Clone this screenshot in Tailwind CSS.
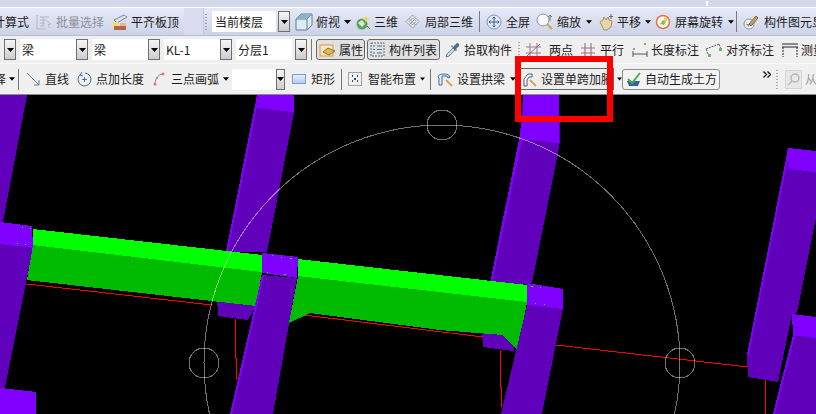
<!DOCTYPE html>
<html lang="zh-CN">
<head>
<meta charset="UTF-8">
<title>钢筋算量</title>
<script src="https://cdn.jsdelivr.net/npm/@tailwindcss/browser@4"></script>
</head>
<body class="bg-black">
<div class="relative flex flex-col w-[816px] h-[414px] overflow-hidden text-[12px] leading-none whitespace-nowrap text-[#1a1a1a] font-['Noto_Sans_CJK_SC','Noto_Sans',sans-serif]">

  <!-- top strip -->
  <div class="flex shrink-0 h-[7px] bg-[#d3d8eb]">
    <div class="ml-[706px] mt-[1px] w-[2px] h-[5px] bg-white"></div>
  </div>
  <div class="shrink-0 h-[1px] bg-white"></div>

  <!-- row 1 -->
  <div class="flex items-center shrink-0 *:shrink-0 h-[28px] border-b border-[#b9bccb] bg-linear-to-b from-[#e6e9f6] to-[#cdd3e8]">
    <span class="ml-[-7px] w-[36px]">计算式</span>
    <svg class="ml-[7px] w-[16px] h-[16px]" viewBox="0 0 16 16" fill="none" stroke="#b4b8c4"><path d="M1 1v14h9M4 3h9M4 6h7M4 9h5M4 12h4M7 3v9M11 7l4 3-3 1 2 3"/></svg>
    <span class="ml-[4px] w-[48px] text-[#8d8f98]">批量选择</span>
    <svg class="ml-[8px] w-[16px] h-[16px]" viewBox="0 0 16 16"><path d="M2 6 12 1l3 2L5 9z" fill="#dfe3ea" stroke="#7d8796"/><rect x="1" y="8" width="5" height="4" fill="#f2e25a"/><rect x="2" y="12" width="12" height="4" fill="#b5654b"/><path d="M8 9h6v3H8z" fill="#e8b98f"/></svg>
    <span class="ml-[3px] w-[48px]">平齐板顶</span>
    <div class="ml-[5px] w-[20px] h-[27px] bg-[#d8dcee] border-r border-[#c3c7da]"></div>
    <div class="flex flex-col gap-[2px] ml-[1px] w-[2px]">
      <i class="block w-[2px] h-[1px] bg-[#9aa0b6]"></i><i class="block w-[2px] h-[1px] bg-[#9aa0b6]"></i><i class="block w-[2px] h-[1px] bg-[#9aa0b6]"></i><i class="block w-[2px] h-[1px] bg-[#9aa0b6]"></i><i class="block w-[2px] h-[1px] bg-[#9aa0b6]"></i><i class="block w-[2px] h-[1px] bg-[#9aa0b6]"></i>
    </div>
    <div class="flex items-center ml-[5px] pl-[3px] w-[64px] h-[21px] bg-white">当前楼层</div>
    <div class="flex items-center justify-center ml-[2px] w-[12px] h-[21px] border border-[#6f6f6f] bg-linear-to-b from-[#f6f6f6] to-[#cdcdcd]"><svg class="w-[7px] h-[4px]" viewBox="0 0 7 4"><path d="M0 0h7L3.500 4z"/></svg></div>
    <svg class="ml-[5px] w-[18px] h-[18px]" viewBox="0 0 18 18"><path d="M1 6 6 1h11v11l-5 5H1z" fill="#dcebf5" stroke="#5d7f96"/><path d="M1 6h11v11M12 6l5-5" fill="none" stroke="#5d7f96"/><path d="M1 6 6 1h11l-5 5z" fill="#8fb1c7"/></svg>
    <span class="ml-[3px] w-[24px]">俯视</span>
    <svg class="ml-[4px] w-[7px] h-[4px]" viewBox="0 0 7 4"><path d="M0 0h7L3.500 4z"/></svg>
    <svg class="ml-[4px] w-[16px] h-[16px]" viewBox="0 0 16 16"><circle cx="7" cy="10" r="5.500" fill="#5aa25a"/><path d="M3 9l4-3 3 4-3 3z" fill="#d9e9d9"/><path d="M11 1l1 3 3 1-3 1-1 3-1-3-3-1 3-1z" fill="#e9d94f"/><path d="M12 12l3 3" stroke="#666"/></svg>
    <span class="ml-[3px] w-[24px]">三维</span>
    <svg class="ml-[7px] w-[15px] h-[15px]" viewBox="0 0 15 15" fill="#e5ecf4" stroke="#8a9db3"><path d="M7.500 1 14 7.500 7.500 14 1 7.500z"/><path d="M4 4.500 10.500 11M11 4 4.500 10.500M7.500 4 11 7.500 7.500 11 4 7.500z" fill="#fbf3c9"/></svg>
    <span class="ml-[5px] w-[48px]">局部三维</span>
    <div class="ml-[6px] w-[1px] h-[21px] bg-[#777b88]"></div>
    <svg class="ml-[6px] w-[16px] h-[16px]" viewBox="0 0 16 16"><circle cx="8" cy="8" r="7" fill="#dfe8f5" stroke="#7f94b3"/><path d="M8 3v10M3 8h10M6.500 4.500 8 3l1.500 1.500M6.500 11.500 8 13l1.500-1.500M4.500 6.500 3 8l1.500 1.500M11.500 6.500 13 8l-1.500 1.500" fill="none" stroke="#3c5a8c"/></svg>
    <span class="ml-[4px] w-[24px]">全屏</span>
    <svg class="ml-[6px] w-[19px] h-[17px]" viewBox="0 0 19 17"><circle cx="7" cy="7" r="6" fill="#f6f8fb" stroke="#8d97a6"/><path d="M11 11l5 5" stroke="#c8a648" stroke-width="2"/><path d="M14 2v6M12 4l2-2 2 2" fill="none" stroke="#777"/></svg>
    <span class="ml-[2px] w-[24px]">缩放</span>
    <svg class="ml-[5px] w-[6px] h-[4px]" viewBox="0 0 7 4"><path d="M0 0h7L3.500 4z"/></svg>
    <svg class="ml-[6px] w-[17px] h-[18px]" viewBox="0 0 17 18"><path d="M2 9l3-2 1-3 2 3 2-3 1 3 3 1-1 6-4 3H6z" fill="#e8d6a8" stroke="#a38f5f"/><path d="M13 1v5M11 3.500h4" stroke="#6d6d6d"/></svg>
    <span class="ml-[2px] w-[24px]">平移</span>
    <svg class="ml-[4px] w-[6px] h-[4px]" viewBox="0 0 7 4"><path d="M0 0h7L3.500 4z"/></svg>
    <svg class="ml-[4px] w-[16px] h-[16px]" viewBox="0 0 16 16"><circle cx="8" cy="8" r="6.500" fill="#f5f9ea" stroke="#e4734e" stroke-width="1.500"/><path d="M5 10l3-4 3 2-2 3z" fill="#7fc25a"/><rect x="9" y="4" width="3" height="3" fill="#f0d23c"/></svg>
    <span class="ml-[4px] w-[48px]">屏幕旋转</span>
    <svg class="ml-[5px] w-[6px] h-[4px]" viewBox="0 0 7 4"><path d="M0 0h7L3.500 4z"/></svg>
    <div class="ml-[2px] w-[1px] h-[21px] bg-[#777b88]"></div>
    <svg class="ml-[6px] w-[16px] h-[16px]" viewBox="0 0 16 16"><circle cx="6" cy="10" r="5" fill="#eef1f6" stroke="#8d97a6"/><path d="M6 10 13 2l2 2-7 8z" fill="#d2a35a" stroke="#75613b"/><path d="M3 10h3v3z" fill="#6f87b0"/></svg>
    <span class="ml-[5px]">构件图元显示</span>
  </div>

  <!-- row 2 -->
  <div class="flex items-center shrink-0 *:shrink-0 h-[28px] border-b border-[#fafafa] bg-[#efefef]">
    <div class="flex items-center justify-center ml-[4px] w-[12px] h-[21px] border border-[#6f6f6f] bg-linear-to-b from-[#f6f6f6] to-[#cdcdcd]"><svg class="w-[7px] h-[4px]" viewBox="0 0 7 4"><path d="M0 0h7L3.500 4z"/></svg></div>
    <div class="flex items-center ml-[4px] pl-[2px] w-[56px] h-[21px] bg-white">梁</div>
    <div class="flex items-center justify-center w-[12px] h-[21px] border border-[#6f6f6f] bg-linear-to-b from-[#f6f6f6] to-[#cdcdcd]"><svg class="w-[7px] h-[4px]" viewBox="0 0 7 4"><path d="M0 0h7L3.500 4z"/></svg></div>
    <div class="flex items-center ml-[4px] pl-[2px] w-[56px] h-[21px] bg-white">梁</div>
    <div class="flex items-center justify-center w-[12px] h-[21px] border border-[#6f6f6f] bg-linear-to-b from-[#f6f6f6] to-[#cdcdcd]"><svg class="w-[7px] h-[4px]" viewBox="0 0 7 4"><path d="M0 0h7L3.500 4z"/></svg></div>
    <div class="flex items-center ml-[4px] pl-[2px] w-[56px] h-[21px] bg-white">KL-1</div>
    <div class="flex items-center justify-center w-[12px] h-[21px] border border-[#6f6f6f] bg-linear-to-b from-[#f6f6f6] to-[#cdcdcd]"><svg class="w-[7px] h-[4px]" viewBox="0 0 7 4"><path d="M0 0h7L3.500 4z"/></svg></div>
    <div class="flex items-center ml-[4px] pl-[2px] w-[56px] h-[21px] bg-white">分层1</div>
    <div class="flex items-center justify-center ml-[3px] w-[12px] h-[21px] border border-[#6f6f6f] bg-linear-to-b from-[#f6f6f6] to-[#cdcdcd]"><svg class="w-[7px] h-[4px]" viewBox="0 0 7 4"><path d="M0 0h7L3.500 4z"/></svg></div>
    <div class="ml-[4px] w-[1px] h-[21px] bg-[#777]"></div>
    <div class="flex items-center ml-[4px] pl-[2px] w-[49px] h-[21px] rounded-[3px] border border-[#666] bg-[#e1e1e1]">
      <svg class="shrink-0 w-[17px] h-[14px]" viewBox="0 0 17 14"><rect x="1" y="2" width="13" height="11" fill="#fbe6c8" stroke="#e8924a"/><path d="M4 9l5-4 7 3-6 4z" fill="#e3bb54" stroke="#8a6f2d"/></svg>
      <span class="ml-[3px]">属性</span>
    </div>
    <div class="flex items-center ml-[2px] pl-[2px] w-[73px] h-[21px] rounded-[3px] border border-[#666] bg-[#e1e1e1]">
      <svg class="shrink-0 w-[15px] h-[15px]" viewBox="0 0 15 15" fill="none" stroke="#4d6d96"><rect x="1" y="1" width="13" height="13" stroke-dasharray="2 1"/><path d="M3 4h2M3 7.500h2M3 11h2M7 4h5M7 7.500h5M7 11h5"/></svg>
      <span class="ml-[4px]">构件列表</span>
    </div>
    <svg class="ml-[5px] w-[15px] h-[16px]" viewBox="0 0 15 16"><path d="M1 15l1-3 6-6 2 2-6 6z" fill="#cfe0ee" stroke="#5b7da0"/><path d="M8 5l3-3a1.500 1.500 0 0 1 3 2l-3 3 1 1-1 1-5-5 1-1z" fill="#4c6d91"/></svg>
    <span class="ml-[4px] w-[48px]">拾取构件</span>
    <div class="flex flex-col gap-[2px] ml-[6px] w-[2px]">
      <i class="block w-[2px] h-[1px] bg-[#a9a9a9]"></i><i class="block w-[2px] h-[1px] bg-[#a9a9a9]"></i><i class="block w-[2px] h-[1px] bg-[#a9a9a9]"></i><i class="block w-[2px] h-[1px] bg-[#a9a9a9]"></i><i class="block w-[2px] h-[1px] bg-[#a9a9a9]"></i><i class="block w-[2px] h-[1px] bg-[#a9a9a9]"></i>
    </div>
    <svg class="ml-[5px] w-[17px] h-[16px]" viewBox="0 0 17 16" fill="none"><path d="M5 1v14M12 1v14M1 5h15M1 11h15" stroke="#8d7f95"/><path d="M2 14 15 2" stroke="#d9534f"/></svg>
    <span class="ml-[7px] w-[24px]">两点</span>
    <svg class="ml-[8px] w-[14px] h-[14px]" viewBox="0 0 14 14" fill="none"><path d="M4 0v14M10 0v14" stroke="#5a6fa8"/><path d="M0 5h14M0 10h14" stroke="#c9605c"/></svg>
    <span class="ml-[5px] w-[24px]">平行</span>
    <svg class="ml-[8px] w-[16px] h-[16px]" viewBox="0 0 16 16" fill="none" stroke="#555"><path d="M1 9v6M15 9v6M1 12h14"/><rect x="1" y="6" width="2" height="2" fill="#66bb6a" stroke="none"/><rect x="12" y="1" width="2" height="2" fill="#66bb6a" stroke="none"/></svg>
    <span class="ml-[3px] w-[48px]">长度标注</span>
    <svg class="ml-[6px] w-[17px] h-[16px]" viewBox="0 0 17 16" fill="none" stroke="#555"><path d="M1 7 14 2M3 12 1 7M16 7l-2-5" stroke-dasharray="2 1"/><rect x="3" y="12" width="3" height="3" fill="#66bb6a" stroke="none"/><rect x="14" y="6" width="3" height="3" fill="#66bb6a" stroke="none"/></svg>
    <span class="ml-[4px] w-[48px]">对齐标注</span>
    <svg class="ml-[8px] w-[16px] h-[16px]" viewBox="0 0 16 16" fill="none" stroke="#222"><path d="M0 2h16M0 5h16" /><path d="M1 5v10M15 5v10" stroke-dasharray="2 1"/></svg>
    <span class="ml-[3px]">测量</span>
  </div>

  <!-- row 3 -->
  <div class="flex items-center shrink-0 *:shrink-0 h-[31px] border-b border-[#8c8c8c] bg-[#f0f0f0]">
    <span class="ml-[-6px] w-[12px]">择</span>
    <svg class="ml-[3px] w-[6px] h-[4px]" viewBox="0 0 7 4"><path d="M0 0h7L3.500 4z"/></svg>
    <div class="ml-[3px] w-[1px] h-[21px] bg-[#777]"></div>
    <svg class="ml-[8px] w-[13px] h-[13px]" viewBox="0 0 13 13" fill="none" stroke="#5e7ea3"><path d="M0 0 12 12M7 12h5V7"/></svg>
    <span class="ml-[5px] w-[24px]">直线</span>
    <svg class="ml-[8px] w-[15px] h-[15px]" viewBox="0 0 15 15" fill="none" stroke="#4d6d96"><path d="M4 2a6.500 6.500 0 1 0 4-1"/><path d="M5 0 3 3l3 1M7.500 5v5M5 7.500h5"/></svg>
    <span class="ml-[4px] w-[48px]">点加长度</span>
    <svg class="ml-[9px] w-[12px] h-[14px]" viewBox="0 0 12 14" fill="none"><path d="M2 12C2 6 6 2 10 2" stroke="#6d8fb5"/><circle cx="2" cy="12" r="1.500" fill="#e2766d"/><circle cx="10" cy="2" r="1.500" fill="#e2766d"/><circle cx="4" cy="6" r="1" fill="#e2766d"/></svg>
    <span class="ml-[6px] w-[48px]">三点画弧</span>
    <svg class="ml-[4px] w-[6px] h-[4px]" viewBox="0 0 7 4"><path d="M0 0h7L3.500 4z"/></svg>
    <div class="ml-[3px] w-[44px] h-[21px] bg-white"></div>
    <div class="flex items-center justify-center w-[9px] h-[21px] border border-[#6f6f6f] bg-linear-to-b from-[#f6f6f6] to-[#cdcdcd]"><svg class="w-[7px] h-[4px]" viewBox="0 0 7 4"><path d="M0 0h7L3.500 4z"/></svg></div>
    <div class="ml-[7px] w-[14px] h-[10px] border border-[#7a9bd0] bg-linear-to-b from-[#e6effb] to-[#b5cdee]"></div>
    <span class="ml-[5px] w-[24px]">矩形</span>
    <div class="ml-[6px] w-[1px] h-[21px] bg-[#777]"></div>
    <svg class="ml-[6px] w-[14px] h-[14px]" viewBox="0 0 14 14" fill="none" stroke="#555"><rect x="0.500" y="0.500" width="13" height="13" stroke-dasharray="1 1"/><path d="M4 4h1M9 4h1M4 9h1M9 9h1M7 6v2" stroke="#2d4f7a" stroke-width="2"/></svg>
    <span class="ml-[6px] w-[48px]">智能布置</span>
    <svg class="ml-[4px] w-[5px] h-[4px]" viewBox="0 0 7 4"><path d="M0 0h7L3.500 4z"/></svg>
    <div class="ml-[5px] w-[1px] h-[21px] bg-[#777]"></div>
    <svg class="ml-[6px] w-[16px] h-[16px]" viewBox="0 0 16 16" fill="none"><path d="M1 6C1 2 13 2 13 6l-2 1-1-2H5v9H2V7z" fill="#e8f2fb" stroke="#3f6d9b"/><path d="M9 9l6 6" stroke="#d9a05a" stroke-width="2"/></svg>
    <span class="ml-[4px] w-[48px]">设置拱梁</span>
    <svg class="ml-[5px] w-[6px] h-[4px]" viewBox="0 0 7 4"><path d="M0 0h7L3.500 4z"/></svg>
    <div class="flex items-center ml-[4px] pl-[2px] w-[94px] h-[22px] overflow-hidden border border-[#666] bg-[#eeeeee]">
      <svg class="shrink-0 w-[15px] h-[15px]" viewBox="0 0 15 15" fill="none"><path d="M1 14V7l4-5h4v3H6L4 8v6z" fill="#fff" stroke="#3f5d82"/><path d="M7 8l6 6" stroke="#d9a05a" stroke-width="2"/></svg>
      <span class="ml-[3px]">设置单跨加腋</span>
    </div>
    <svg class="ml-[3px] w-[5px] h-[4px]" viewBox="0 0 7 4"><path d="M0 0h7L3.500 4z"/></svg>
    <div class="flex items-center pl-[3px] w-[98px] h-[21px] rounded-[3px] border border-[#8c8c8c] bg-[#f3f3f3]">
      <svg class="shrink-0 w-[15px] h-[15px]" viewBox="0 0 15 15" fill="none"><path d="M1 9h13l-2 5H3z" fill="#3d5f9e"/><path d="M2 7l4 4 8-10" stroke="#3fb04a" stroke-width="2"/></svg>
      <span class="ml-[4px]">自动生成土方</span>
    </div>
    <svg class="ml-[43px] mb-[10px] w-[8px] h-[7px]" viewBox="0 0 8 7" fill="none" stroke="#111" stroke-width="1.300"><path d="M0.500 0.500l3 3-3 3M4.500 0.500l3 3-3 3"/></svg>
    <div class="flex flex-col gap-[2px] ml-[5px] w-[2px]">
      <i class="block w-[2px] h-[1px] bg-[#a9a9a9]"></i><i class="block w-[2px] h-[1px] bg-[#a9a9a9]"></i><i class="block w-[2px] h-[1px] bg-[#a9a9a9]"></i><i class="block w-[2px] h-[1px] bg-[#a9a9a9]"></i><i class="block w-[2px] h-[1px] bg-[#a9a9a9]"></i><i class="block w-[2px] h-[1px] bg-[#a9a9a9]"></i><i class="block w-[2px] h-[1px] bg-[#a9a9a9]"></i>
    </div>
    <div class="flex items-center justify-center ml-[7px] w-[17px] h-[19px] border border-[#d5d5d5] bg-[#e8e8e8]">
      <svg class="w-[13px] h-[13px]" viewBox="0 0 13 13" fill="none" stroke="#b5b5b5" stroke-width="1.500"><circle cx="8" cy="5" r="4"/><path d="M5 8l-4 4"/></svg>
    </div>
    <span class="ml-[3px] text-[#9a9a9a]">从</span>
  </div>

  <!-- 3d canvas -->
  <svg class="block shrink-0 w-[816px] h-[319px] bg-black" viewBox="0 95 816 319" shape-rendering="crispEdges">
    <!-- column 1 -->
    <polygon points="0,95 27,95 3,222 0,222" fill="#6000bb"/>
    <polygon points="0,244 33,248 5,388 0,388" fill="#6000bb"/>
    <polygon points="0,222 32,226 33,248 0,244" fill="#8000ff"/>
    <polygon points="0,388 36,392 36,414 0,414" fill="#8000ff"/>
    <!-- column 2 -->
    <polygon points="257,95 294,95 294,112 267,252 226,252" fill="#6000bb"/>
    <polygon points="257,95 259,95 228,252 226,252" fill="#8000ff"/>
    <polygon points="259,95 294,95 294,112 257,108" fill="#8000ff"/>
    <polygon points="217,295 262,295 248,320 218,316" fill="#6000bb"/>
    <!-- column 3 -->
    <polygon points="523,95 559,95 560,142 532,283 490,290 520,135" fill="#6000bb"/>
    <polygon points="520,135 523,110 523,135 492,283 490,283" fill="#8000ff"/>
    <polygon points="523,95 559,95 559,143 522,139" fill="#8000ff"/>
    <polygon points="482,330 522,330 513,351 483,347" fill="#6000bb"/>
    <!-- red lines behind the beams -->
    <g stroke="#ff0000" fill="none">
      <path d="M27 284 212 305"/>
      <path d="M304 315 483 337"/>
      <path d="M556 345 748 367"/>
      <path d="M235.500 319V358H236V380"/>
      <path d="M500.500 350V387H501.500V407"/>
      <path d="M765.500 380V414"/>
    </g>
    <!-- beam 1 -->
    <polygon points="33,245 262,272 256,306 27,280" fill="#00bb00"/>
    <polygon points="33,229 262,255 262,272 33,245" fill="#00ff00"/>
    <!-- beam 2 -->
    <polygon points="298,276 527,302 518,351 503,335 440,330 310,313 289,323" fill="#00bb00"/>
    <polygon points="298,259 527,285 527,302 298,276" fill="#00ff00"/>
    <!-- joint 2 -->
    <polygon points="262,275 297,278 273,414 230,414" fill="#6000bb"/>
    <polygon points="262,275 264,275 232,414 230,414" fill="#8000ff"/>
    <polygon points="262,253 298,257 297,278 262,273" fill="#8000ff"/>
    <g fill="#00ff00">
      <rect x="272" y="255" width="1" height="1"/><rect x="281" y="257" width="1" height="1"/><rect x="290" y="258" width="2" height="1"/><rect x="267" y="272" width="1" height="1"/><rect x="284" y="274" width="2" height="1"/><rect x="22" y="227" width="1" height="1"/><rect x="30" y="228" width="1" height="1"/><rect x="17" y="243" width="1" height="1"/><rect x="25" y="244" width="1" height="1"/>
    </g>
    <!-- joint 3 -->
    <polygon points="527,305 563,309 542,414 501,414" fill="#6000bb"/>
    <polygon points="527,283 563,289 563,309 527,305" fill="#8000ff"/>
    <g fill="#00ff00"><rect x="531" y="286" width="2" height="1"/><rect x="540" y="287" width="1" height="1"/><rect x="535" y="303" width="1" height="1"/><rect x="544" y="304" width="1" height="1"/></g>
    <!-- column 4 -->
    <polygon points="788,148 816,151 816,218 797,313 792,314 778,382 748,377 747,355 766,260" fill="#6000bb"/>
    <polygon points="788,148 790,148 768,260 749,355 747,355 766,260" fill="#8000ff"/>
    <polygon points="788,148 816,151 816,172 788,169" fill="#8000ff"/>
    <!-- column 5 -->
    <polygon points="793,335 816,338 816,414 773,414" fill="#6000bb"/>
    <polygon points="793,335 795,335 775,414 773,414" fill="#8000ff"/>
    <polygon points="792,314 816,317 816,338 793,335" fill="#8000ff"/>
    <!-- construction circles -->
    <g fill="none" stroke="#ffffff" stroke-opacity="0.450">
      <circle cx="442" cy="363" r="238"/>
      <circle cx="442" cy="125" r="15"/>
      <circle cx="204" cy="363" r="15"/>
      <circle cx="680" cy="363" r="15"/>
    </g>
  </svg>

  <!-- red highlight box drawn over the screenshot -->
  <div class="absolute left-[515px] top-[56px] w-[98px] h-[66px] border-[6px] border-[#ff0000]"></div>
</div>
</body>
</html>
